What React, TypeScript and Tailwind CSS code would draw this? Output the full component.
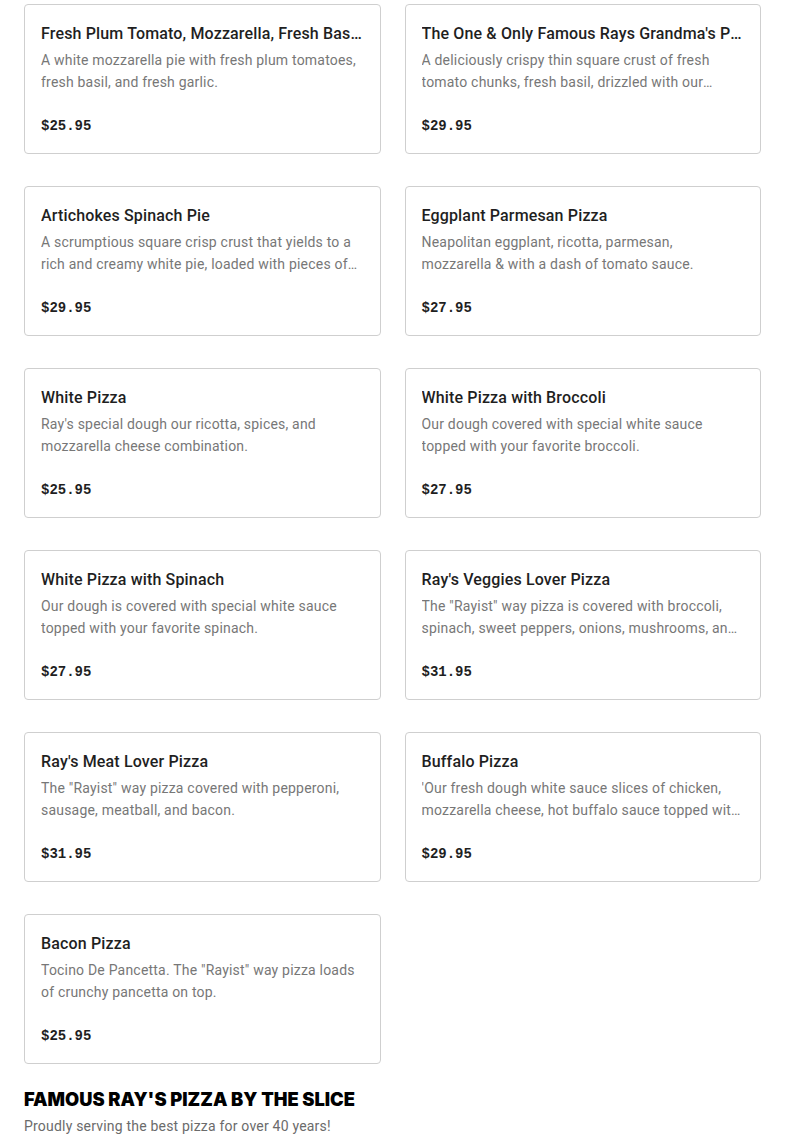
import React from "react";

type Item = { name: string; desc: string; price: string };

const items: Item[] = [
  { name: "Fresh Plum Tomato, Mozzarella, Fresh Basil & Garlic Pie", desc: "A white mozzarella pie with fresh plum tomatoes, fresh basil, and fresh garlic.", price: "$25.95" },
  { name: "The One & Only Famous Rays Grandma's Pizza", desc: "A deliciously crispy thin square crust of fresh tomato chunks, fresh basil, drizzled with our special olive oil and garlic.", price: "$29.95" },
  { name: "Artichokes Spinach Pie", desc: "A scrumptious square crisp crust that yields to a rich and creamy white pie, loaded with pieces of artichoke and spinach.", price: "$29.95" },
  { name: "Eggplant Parmesan Pizza", desc: "Neapolitan eggplant, ricotta, parmesan, mozzarella & with a dash of tomato sauce.", price: "$27.95" },
  { name: "White Pizza", desc: "Ray's special dough our ricotta, spices, and mozzarella cheese combination.", price: "$25.95" },
  { name: "White Pizza with Broccoli", desc: "Our dough covered with special white sauce topped with your favorite broccoli.", price: "$27.95" },
  { name: "White Pizza with Spinach", desc: "Our dough is covered with special white sauce topped with your favorite spinach.", price: "$27.95" },
  { name: "Ray's Veggies Lover Pizza", desc: "The \"Rayist\" way pizza is covered with broccoli, spinach, sweet peppers, onions, mushrooms, and olives.", price: "$31.95" },
  { name: "Ray's Meat Lover Pizza", desc: "The \"Rayist\" way pizza covered with pepperoni, sausage, meatball, and bacon.", price: "$31.95" },
  { name: "Buffalo Pizza", desc: "'Our fresh dough white sauce slices of chicken, mozzarella cheese, hot buffalo sauce topped with blue cheese.", price: "$29.95" },
  { name: "Bacon Pizza", desc: "Tocino De Pancetta. The \"Rayist\" way pizza loads of crunchy pancetta on top.", price: "$25.95" },
];

function Card({ item }: { item: Item }) {
  return (
    <div className="border border-[#cfcfcf] rounded-[4px] bg-white px-4 pt-[17px] pb-[17px] flex flex-col">
      <div className="text-[16px] leading-[24px] font-medium text-[#1f1f1f] truncate tracking-[0.15px]">{item.name}</div>
      <div className="mt-[3px] text-[14px] leading-[22px] text-[#777777] line-clamp-2 h-[44px] tracking-[0.2px]">{item.desc}</div>
      <div className="mt-[23px] text-[14px] leading-[20px] font-bold text-[#1f1f1f]" style={{ fontFamily: '"Liberation Mono", monospace' }}>
        {item.price}
      </div>
    </div>
  );
}

export default function App() {
  return (
    <div className="bg-white min-h-[1146px] px-6 pt-[4px]" style={{ fontFamily: 'Roboto, "Liberation Sans", sans-serif' }}>
      <div className="grid grid-cols-2 gap-x-6 gap-y-8">
        {items.map((it, i) => (
          <Card key={i} item={it} />
        ))}
      </div>
      <h2 className="mt-[22px] text-[18.3px] leading-[26px] font-black uppercase text-black" style={{ fontFamily: 'Inter, sans-serif' }}>
        Famous Ray's Pizza by the Slice
      </h2>
      <p className="mt-[4px] text-[14px] leading-[20px] text-[#6b6b6b] tracking-[0.2px]">Proudly serving the best pizza for over 40 years!</p>
    </div>
  );
}
